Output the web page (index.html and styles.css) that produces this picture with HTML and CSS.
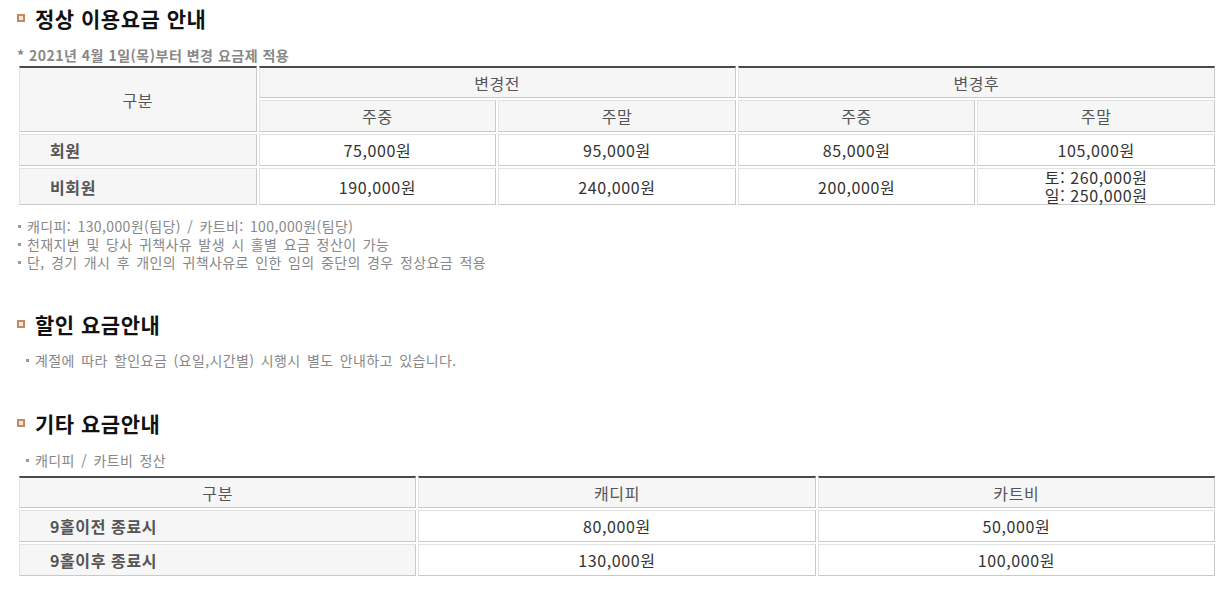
FILE: index.html
```html
<!DOCTYPE html>
<html lang="ko">
<head>
<meta charset="utf-8">
<title>이용요금 안내</title>
<link rel="stylesheet" href="styles.css">
</head>
<body>
<div class="page">
  <section class="sec sec-first">
    <h2 class="title"><span class="ico"></span>정상 이용요금 안내</h2>
    <p class="sub">* 2021년 4월 1일(목)부터 변경 요금제 적용</p>
    <table class="tbl tbl5">
      <thead>
        <tr>
          <th rowspan="2" class="top">구분</th>
          <th colspan="2" class="top">변경전</th>
          <th colspan="2" class="top">변경후</th>
        </tr>
        <tr>
          <th>주중</th><th>주말</th><th>주중</th><th>주말</th>
        </tr>
      </thead>
      <tbody>
        <tr>
          <th class="lbl">회원</th>
          <td>75,000원</td><td>95,000원</td><td>85,000원</td><td>105,000원</td>
        </tr>
        <tr>
          <th class="lbl">비회원</th>
          <td>190,000원</td><td>240,000원</td><td>200,000원</td><td class="two"><span>토: 260,000원</span><span>일: 250,000원</span></td>
        </tr>
      </tbody>
    </table>
    <ul class="notes">
      <li>캐디피: 130,000원(팀당) / 카트비: 100,000원(팀당)</li>
      <li>천재지변 및 당사 귀책사유 발생 시 홀별 요금 정산이 가능</li>
      <li>단, 경기 개시 후 개인의 귀책사유로 인한 임의 중단의 경우 정상요금 적용</li>
    </ul>
  </section>

  <section class="sec sec-second">
    <h2 class="title"><span class="ico"></span>할인 요금안내</h2>
    <ul class="notes indent">
      <li>계절에 따라 할인요금 (요일,시간별) 시행시 별도 안내하고 있습니다.</li>
    </ul>
  </section>

  <section class="sec sec-third">
    <h2 class="title"><span class="ico"></span>기타 요금안내</h2>
    <ul class="notes indent">
      <li>캐디피 / 카트비 정산</li>
    </ul>
    <table class="tbl tbl3">
      <thead>
        <tr>
          <th class="top">구분</th>
          <th class="top">캐디피</th>
          <th class="top">카트비</th>
        </tr>
      </thead>
      <tbody>
        <tr>
          <th class="lbl">9홀이전 종료시</th>
          <td>80,000원</td><td>50,000원</td>
        </tr>
        <tr>
          <th class="lbl">9홀이후 종료시</th>
          <td>130,000원</td><td>100,000원</td>
        </tr>
      </tbody>
    </table>
  </section>
</div>
</body>
</html>
```
FILE: styles.css
```css
html, body {
  margin: 0;
  padding: 0;
  background: #fff;
}
body {
  font-family: "Noto Sans CJK KR", "Noto Sans", sans-serif;
  color: #333;
}
.page {
  padding: 6px 0 0 17px;
  width: 1200px;
}
.sec { margin: 0; }
.sec-second { margin-top: 41px; }
.sec-third { margin-top: 42px; }

.title {
  margin: 0;
  font-size: 21px;
  line-height: 24px;
  font-weight: 700;
  letter-spacing: 0.5px;
  color: #111;
  display: flex;
  align-items: center;
}
.ico {
  display: inline-block;
  width: 4px;
  height: 4px;
  border: 2px solid #c38a5f;
  background: #f3e6da;
  margin-right: 10px;
  flex: none;
}
.sub {
  margin: 16px 0 0;
  font-size: 14px;
  line-height: 18px;
  font-weight: 700;
  letter-spacing: 0.5px;
  color: #888;
}

.tbl {
  width: 1200px;
  border-collapse: separate;
  border-spacing: 2px;
  table-layout: fixed;
  font-size: 16px;
  line-height: 18px;
  letter-spacing: 0.6px;
}
.tbl th, .tbl td {
  border: 1px solid;
  border-color: #e2e2e2 #c9c9c9 #c9c9c9 #e2e2e2;
  height: 30px;
  padding: 0;
  text-align: center;
  vertical-align: middle;
}
.tbl th {
  background: #f6f6f6;
  font-weight: 400;
  color: #555;
}
.tbl th.top {
  border-top: 2px solid #4a4a4a;
  height: 29px;
}
.tbl th.lbl {
  text-align: left;
  padding-left: 30px;
  font-weight: 700;
  color: #555;
}
.tbl td {
  background: #fff;
  color: #333;
}
.tbl td.two span {
  display: block;
  line-height: 17.5px;
}
.tbl3 { margin-top: 5px; }

.notes {
  list-style: none;
  margin: 10px 0 0;
  padding: 0;
  font-size: 14px;
  line-height: 18px;
  letter-spacing: 0.4px;
  word-spacing: 2px;
  color: #888;
}
.notes li {
  display: flex;
  align-items: center;
}
.notes li::before {
  content: "";
  width: 3px;
  height: 3px;
  background: #999;
  margin: 0 6px 0 1px;
  flex: none;
}
.notes.indent { margin-top: 15px; }
.notes.indent li::before { margin-left: 9px; }
.sec-third .notes.indent { margin-top: 16px; }
```
